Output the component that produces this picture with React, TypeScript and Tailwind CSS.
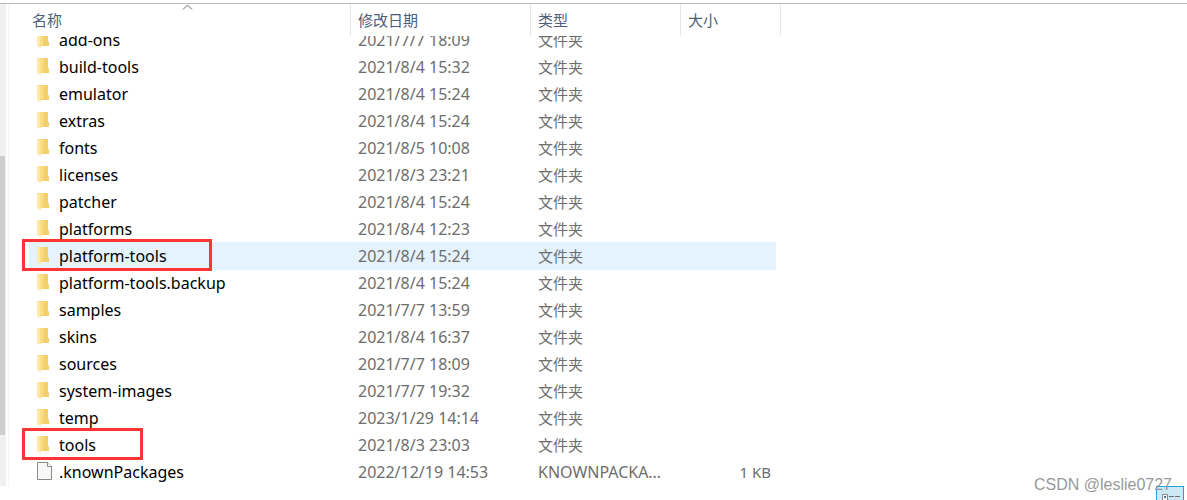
type Entry = {
  name: string;
  date: string;
  type?: string;
  size?: string;
  hovered?: boolean;
  mark?: string;
};

const entries: Entry[] = [
  { name: "add-ons", date: "2021/7/7 18:09" },
  { name: "build-tools", date: "2021/8/4 15:32" },
  { name: "emulator", date: "2021/8/4 15:24" },
  { name: "extras", date: "2021/8/4 15:24" },
  { name: "fonts", date: "2021/8/5 10:08" },
  { name: "licenses", date: "2021/8/3 23:21" },
  { name: "patcher", date: "2021/8/4 15:24" },
  { name: "platforms", date: "2021/8/4 12:23" },
  { name: "platform-tools", date: "2021/8/4 15:24", hovered: true, mark: "w-[190px]" },
  { name: "platform-tools.backup", date: "2021/8/4 15:24" },
  { name: "samples", date: "2021/7/7 13:59" },
  { name: "skins", date: "2021/8/4 16:37" },
  { name: "sources", date: "2021/7/7 18:09" },
  { name: "system-images", date: "2021/7/7 19:32" },
  { name: "temp", date: "2023/1/29 14:14" },
  { name: "tools", date: "2021/8/3 23:03", mark: "w-[121px]" },
  { name: ".knownPackages", date: "2022/12/19 14:53", type: "KNOWNPACKAGES", size: "1 KB" },
];

const columns = [
  { label: "名称", className: "w-[322px] pl-[3px]" },
  { label: "修改日期", className: "w-[180px] pl-[7px]" },
  { label: "类型", className: "w-[150px] pl-[7px]" },
  { label: "大小", className: "w-[100px] pl-[7px]" },
];

function FolderIcon() {
  return (
    <svg width="16" height="20" viewBox="0 0 16 20" aria-hidden="true">
      <path d="M1 1h10v10l1 1v4H4z" fill="#f9dc82" />
      <path d="M7 1h4v10l1 1v4H6z" fill="#f3cf6c" />
      <path d="M0 1h1l3 2v14l-1 1-3-2z" fill="#ffe9a6" />
      <path d="M3 3h1v14H3z" fill="#fbdf8c" />
    </svg>
  );
}

function FileIcon() {
  return (
    <svg width="16" height="20" viewBox="0 0 16 20" aria-hidden="true">
      <path d="M.5 .5h10l4 4v13H.5z" fill="#f7f7f7" stroke="#8a8a8a" />
      <path d="M10.5 .5v4h4" fill="#fff" stroke="#8a8a8a" />
    </svg>
  );
}

function Row({ entry, clipped }: { entry: Entry; clipped: boolean }) {
  // the first row is partly scrolled under the header
  const cell = clipped ? "flex h-[17px] items-end overflow-hidden" : "-mb-px h-7";
  const inner = `flex h-7 w-full shrink-0 items-center ${clipped ? "-mb-px" : ""} ${entry.hovered ? "bg-[#e5f3ff]" : ""}`;

  return (
    <tr className="text-[#6d6d6d]">
      <td className="p-0">
        <div className={`relative ${cell}`}>
          <div className={`${inner} gap-1.5 pl-2 text-base leading-5 text-black`}>
            {entry.type ? <FileIcon /> : <FolderIcon />}
            <span>{entry.name}</span>
          </div>
          {entry.mark && (
            <div className={`absolute -top-[3px] -left-[7px] h-8 border-3 border-[#fc3434] ${entry.mark}`} />
          )}
        </div>
      </td>
      <td className="p-0">
        <div className={cell}>
          <div className={`${inner} pl-[7px] text-base leading-5`}>{entry.date}</div>
        </div>
      </td>
      <td className="p-0">
        <div className={cell}>
          <div className={`${inner} pr-4 pl-[7px] ${entry.type ? "text-base leading-5" : ""}`}>
            <span className="truncate">{entry.type ?? "文件夹"}</span>
          </div>
        </div>
      </td>
      <td className="p-0 pr-[5px]">
        <div className={cell}>
          <div className={`${inner} justify-end pr-[5px]`}>{entry.size}</div>
        </div>
      </td>
    </tr>
  );
}

export default function App() {
  return (
    <div className="relative flex min-h-screen flex-col overflow-hidden bg-white pt-[3px] font-['Noto_Sans','Noto_Sans_CJK_SC',sans-serif] text-[15px] leading-5">
      <div className="flex border-t border-[#b9b9b9]">
        <div className="w-1.5 shrink-0 bg-[#f0f0f0] pt-[152px]">
          <div className="h-[279px] w-[5px] bg-[#cdcdcd]" />
        </div>
        <main className="ml-0.5 grow border-l border-[#f5f5f5] pb-px pl-5">
          <table className="w-[752px] table-fixed border-collapse">
            <thead>
              <tr>
                {columns.map((column, i) => (
                  <th
                    key={column.label}
                    scope="col"
                    className={`relative h-8 p-0 text-left font-normal text-[#4c607a] ${column.className}`}
                  >
                    <div className="flex h-8 items-center border-r border-[#e5e5e5]">{column.label}</div>
                    {i === 0 && (
                      <svg className="absolute top-0 left-[153px]" width="11" height="7" aria-hidden="true">
                        <path d="M1 5.5l4.5-4.5L10 5.5" fill="none" stroke="#6d6d6d" />
                      </svg>
                    )}
                  </th>
                ))}
              </tr>
            </thead>
            <tbody>
              {entries.map((entry, i) => (
                <Row key={entry.name} entry={entry} clipped={i === 0} />
              ))}
            </tbody>
          </table>
        </main>
      </div>

      <footer className="flex justify-end pr-[3px]">
        <button
          type="button"
          aria-label="详细信息"
          className="h-3.5 w-7 border border-b-0 border-[#26a0da] bg-[#cbe8f6]"
        >
          <svg width="26" height="13" aria-hidden="true">
            <path d="M5.5 13V7.5h5V13" fill="#fff" stroke="#8a8a8a" />
            <path d="M7 9h2v2H7z" fill="#3b6ea5" />
            <path d="M12 9.5h5M18 9.5h5" stroke="#6d6d6d" />
          </svg>
        </button>
      </footer>

      <p className="absolute right-[15px] bottom-[3px] font-['Liberation_Sans',sans-serif] text-base leading-6 text-[#999999]">
        CSDN @leslie0727
      </p>
    </div>
  );
}
